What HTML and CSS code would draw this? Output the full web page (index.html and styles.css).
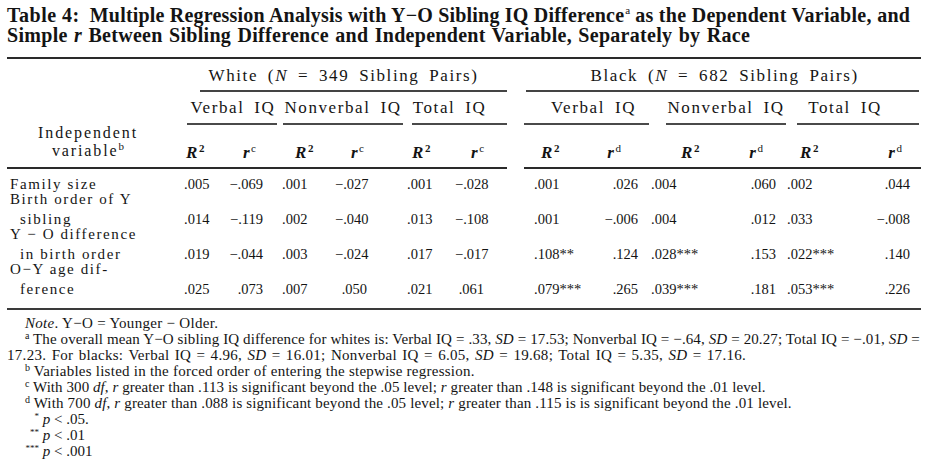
FILE: index.html
```html
<!DOCTYPE html>
<html lang="en">
<head>
<meta charset="utf-8">
<title>Table 4</title>
<link rel="stylesheet" href="styles.css">
</head>
<body>
<div class="page">
  <h1 class="title">
    <span class="t-line"><span class="t-a">Table 4:</span> <span class="t-b">Multiple Regression Analysis with Y&minus;O Sibling IQ Difference</span><sup class="t-sup">a</sup> <span class="t-c">as the Dependent Variable, and</span></span>
    <span class="t-line t-line2">Simple <i>r</i> Between Sibling Difference and Independent Variable, Separately by Race</span>
  </h1>

  <table class="reg">
    <colgroup>
      <col class="c-label">
      <col class="c1"><col class="c2"><col class="c3"><col class="c4"><col class="c5"><col class="c6">
      <col class="c-gap">
      <col class="c7"><col class="c8"><col class="c9"><col class="c10"><col class="c11"><col class="c12">
    </colgroup>
    <thead>
      <tr class="h-group">
        <th class="lab-head" rowspan="3"><span class="lh1">Independent</span><span class="lh2">variable<sup>b</sup></span></th>
        <th colspan="6"><div class="grp grp-white">White (<i>N</i> = 349 Sibling Pairs)</div></th>
        <th class="gap" rowspan="3"></th>
        <th colspan="6"><div class="grp grp-black">Black (<i>N</i> = 682 Sibling Pairs)</div></th>
      </tr>
      <tr class="h-sub">
        <th colspan="2"><div class="sub sub-wv">Verbal IQ</div></th>
        <th colspan="2"><div class="sub sub-wn">Nonverbal IQ</div></th>
        <th colspan="2"><div class="sub sub-wt">Total IQ</div></th>
        <th colspan="2"><div class="sub sub-bv">Verbal IQ</div></th>
        <th colspan="2"><div class="sub sub-bn">Nonverbal IQ</div></th>
        <th colspan="2"><div class="sub sub-bt">Total IQ</div></th>
      </tr>
      <tr class="h-stat">
        <th class="R h1"><i>R</i><sup>2</sup></th>
        <th class="r h2"><i>r</i><sup>c</sup></th>
        <th class="R h3"><i>R</i><sup>2</sup></th>
        <th class="r h4"><i>r</i><sup>c</sup></th>
        <th class="R h5"><i>R</i><sup>2</sup></th>
        <th class="r h6"><i>r</i><sup>c</sup></th>
        <th class="R h7"><i>R</i><sup>2</sup></th>
        <th class="r h8"><i>r</i><sup>d</sup></th>
        <th class="R h9"><i>R</i><sup>2</sup></th>
        <th class="r h10"><i>r</i><sup>d</sup></th>
        <th class="R h11"><i>R</i><sup>2</sup></th>
        <th class="r h12"><i>r</i><sup>d</sup></th>
      </tr>
    </thead>
    <tbody>
      <tr class="row-first">
        <td class="lab"><span class="la">Family size</span></td>
        <td class="d1">.005</td><td class="d2">&minus;.069</td>
        <td class="d3">.001</td><td class="d4">&minus;.027</td>
        <td class="d5">.001</td><td class="d6">&minus;.028</td>
        <td class="gap"></td>
        <td class="d7">.001</td><td class="d8">.026</td>
        <td class="d9">.004</td><td class="d10">.060</td>
        <td class="d11">.002</td><td class="d12">.044</td>
      </tr>
      <tr>
        <td class="lab"><span class="la">Birth order of Y</span><span class="lb">sibling</span></td>
        <td class="d1">.014</td><td class="d2">&minus;.119</td>
        <td class="d3">.002</td><td class="d4">&minus;.040</td>
        <td class="d5">.013</td><td class="d6">&minus;.108</td>
        <td class="gap"></td>
        <td class="d7">.001</td><td class="d8">&minus;.006</td>
        <td class="d9">.004</td><td class="d10">.012</td>
        <td class="d11">.033</td><td class="d12">&minus;.008</td>
      </tr>
      <tr>
        <td class="lab"><span class="la">Y &minus; O difference</span><span class="lb">in birth order</span></td>
        <td class="d1">.019</td><td class="d2">&minus;.044</td>
        <td class="d3">.003</td><td class="d4">&minus;.024</td>
        <td class="d5">.017</td><td class="d6">&minus;.017</td>
        <td class="gap"></td>
        <td class="d7">.108**</td><td class="d8">.124</td>
        <td class="d9">.028***</td><td class="d10">.153</td>
        <td class="d11">.022***</td><td class="d12">.140</td>
      </tr>
      <tr class="row-last">
        <td class="lab"><span class="la">O&minus;Y age dif-</span><span class="lb">ference</span></td>
        <td class="d1">.025</td><td class="d2">.073</td>
        <td class="d3">.007</td><td class="d4">.050</td>
        <td class="d5">.021</td><td class="d6">.061</td>
        <td class="gap"></td>
        <td class="d7">.079***</td><td class="d8">.265</td>
        <td class="d9">.039***</td><td class="d10">.181</td>
        <td class="d11">.053***</td><td class="d12">.226</td>
      </tr>
    </tbody>
  </table>

  <div class="notes">
    <p class="n-ind n-note"><i>Note</i>. Y&minus;O = Younger &minus; Older.</p>
    <p class="n-ind n-l2"><sup>a</sup> The overall mean Y&minus;O sibling IQ difference for whites is: Verbal IQ = .33, <i>SD</i> = 17.53; Nonverbal IQ = &minus;.64, <i>SD</i> = 20.27; Total IQ = &minus;.01, <i>SD</i> =</p>
    <p class="n-cont">17.23. For blacks: Verbal IQ = 4.96, <i>SD</i> = 16.01; Nonverbal IQ = 6.05, <i>SD</i> = 19.68; Total IQ = 5.35, <i>SD</i> = 17.16.</p>
    <p class="n-ind n-l4"><sup>b</sup> Variables listed in the forced order of entering the stepwise regression.</p>
    <p class="n-ind n-l5"><sup>c</sup> With 300 <i>df</i>, <i>r</i> greater than .113 is significant beyond the .05 level; <i>r</i> greater than .148 is significant beyond the .01 level.</p>
    <p class="n-ind n-l6"><sup>d</sup> With 700 <i>df</i>, <i>r</i> greater than .088 is significant beyond the .05 level; <i>r</i> greater than .115 is is significant beyond the .01 level.</p>
    <p class="n-star"><sup class="st">*</sup> <i>p</i> &lt; .05.</p>
    <p class="n-star"><sup class="st">**</sup> <i>p</i> &lt; .01</p>
    <p class="n-star"><sup class="st">***</sup> <i>p</i> &lt; .001</p>
  </div>
</div>
</body>
</html>
```

FILE: styles.css
```css
html, body {
  margin: 0;
  padding: 0;
  background: #ffffff;
}

.page {
  width: 928px;
  height: 461px;
  overflow: hidden;
  padding: 5px 7px 0 7px;
  box-sizing: border-box;
  color: #141414;
  font-family: "Liberation Serif", "Times New Roman", serif;
}

/* ---------- title ---------- */
.title {
  margin: 0;
  font-size: 20px;
  font-weight: bold;
  line-height: 20px;
}
.t-line {
  display: block;
  white-space: nowrap;
}
.t-a {
  letter-spacing: 0.5px;
  margin-right: 5px;
}
.t-b {
  letter-spacing: 0.2px;
}
.t-c {
  letter-spacing: 0.3px;
}
.t-sup {
  font-size: 11px;
  font-weight: normal;
  line-height: 0;
  vertical-align: 8px;
  margin-left: 1px;
}
.t-line2 {
  letter-spacing: 0.3px;
  word-spacing: 1px;
}

/* ---------- table ---------- */
.reg {
  margin-top: 12px;
  width: 914px;
  table-layout: fixed;
  border-collapse: collapse;
  border-spacing: 0;
  border-top: 2px solid #2a2a2a;
  border-bottom: 2px solid #3a3a3a;
}
.c-label { width: 176px; }
.c1 { width: 45px; }
.c2 { width: 53px; }
.c3 { width: 54px; }
.c4 { width: 72px; }
.c5 { width: 48px; }
.c6 { width: 52px; }
.c-gap { width: 17px; }
.c7 { width: 66px; }
.c8 { width: 61px; }
.c9 { width: 69px; }
.c10 { width: 67px; }
.c11 { width: 63px; }
.c12 { width: 71px; }

.reg th,
.reg td {
  padding: 0;
  font-weight: normal;
  white-space: nowrap;
}

.reg thead th {
  font-size: 17px;
  line-height: 20px;
  letter-spacing: 1.6px;
  word-spacing: 4px;
  text-align: center;
}

.reg thead tr.h-stat th {
  border-bottom: 2px solid #2a2a2a;
}

/* header label cell */
.lab-head {
  vertical-align: bottom;
  border-bottom: 2px solid #2a2a2a;
  padding-bottom: 7px !important;
}
.lh1, .lh2 {
  display: block;
  font-size: 16px;
  line-height: 18px;
  letter-spacing: 1.9px;
  padding-right: 14px;
}
.lh2 sup {
  font-size: 11px;
  letter-spacing: 0;
  line-height: 0;
  vertical-align: 6px;
}

/* group headers */
.h-group th {
  padding-top: 7px;
}
.grp {
  padding-bottom: 4px;
  border-bottom: 2px solid #444;
}
.grp-white {
  margin-left: 17px;
  padding-right: 20px;
}
.grp-black {
  margin: 0 2px;
  padding-left: 4px;
}

/* sub headers */
.h-sub th {
  padding-top: 6px;
}
.sub {
  padding-bottom: 5px;
  border-bottom: 2px solid #4a4a4a;
}
.sub-wv { margin: 0 4px 0 4px; padding-left: 2px; }
.sub-wn { margin: 0 4px 0 2px; }
.sub-wt { margin: 0 0 0 5px; padding-right: 20px; }
.sub-bv { margin: 0 2px 0 0; padding-left: 14px; }
.sub-bn { margin: 0 1px 0 15px; }
.sub-bt { margin: 0 2px 0 10px; padding-right: 26px; }

/* statistic headers */
.h-stat th {
  padding-top: 18px;
  padding-bottom: 4px;
  font-weight: bold;
}
.h-stat i {
  font-style: italic;
  font-weight: bold;
}
.h-stat sup {
  font-size: 11px;
  line-height: 0;
  vertical-align: 6px;
  letter-spacing: 0;
}
.h-stat .r sup {
  font-weight: normal;
}
.reg thead .R { text-align: left; }
.reg thead .r { text-align: right; }
.h1 { padding-left: 3px !important; }
.h2 { padding-right: 25px !important; }
.h3 { padding-left: 14px !important; }
.h4 { padding-right: 43px !important; }
.h5 { padding-left: 5px !important; }
.h6 { padding-right: 23px !important; }
.h7 { padding-left: 17px !important; }
.h8 { padding-right: 30px !important; }
.h9 { padding-left: 30px !important; }
.h10 { padding-right: 24px !important; }
.h11 { padding-left: 13px !important; }
.h12 { padding-right: 19px !important; }

/* body rows */
.reg tbody td {
  font-size: 14.5px;
  line-height: 15px;
  vertical-align: bottom;
}
.reg tbody tr.row-first td {
  padding-top: 8px;
}
.reg tbody tr.row-last td {
  padding-bottom: 11px;
}
.lab {
  font-size: 15px !important;
  letter-spacing: 1.6px;
  padding-left: 3px !important;
}
.la, .lb {
  display: block;
  line-height: 15px;
}
.lb {
  margin-top: 5px;
  padding-left: 10px;
}

.d1, .d3, .d5, .d7, .d9, .d11 { text-align: left; }
.d2, .d4, .d6, .d8, .d10, .d12 { text-align: right; }
.d1 { padding-left: 1px !important; }
.d2 { padding-right: 18px !important; }
.d3 { padding-left: 1px !important; }
.d4 { padding-right: 40px !important; }
.d5 { padding-left: 0 !important; }
.d6 { padding-right: 23px !important; }
.d7 { padding-left: 10px !important; }
.d8 { padding-right: 13px !important; }
.d9 { padding-left: 0 !important; }
.d10 { padding-right: 11px !important; }
.d11 { padding-left: 0 !important; }
.d12 { padding-right: 11px !important; }

/* ---------- notes ---------- */
.notes {
  margin-top: 5px;
  font-size: 15px;
  line-height: 16px;
}
.notes p {
  margin: 0;
  white-space: nowrap;
}
.n-ind {
  padding-left: 18px;
}
.n-note { letter-spacing: 0.3px; }
.n-l2 { letter-spacing: 0.12px; }
.n-cont { letter-spacing: 0.3px; word-spacing: 1.3px; }
.n-l4 { letter-spacing: 0.25px; }
.n-l5 { letter-spacing: 0.07px; }
.n-l6 { letter-spacing: 0.16px; }
.notes sup {
  font-size: 10px;
  line-height: 0;
  vertical-align: 5px;
  letter-spacing: 0;
}
.n-star {
  padding-left: 18px;
}
.n-star .st {
  display: inline-block;
  width: 14px;
  text-align: right;
  font-size: 9px;
}
```
